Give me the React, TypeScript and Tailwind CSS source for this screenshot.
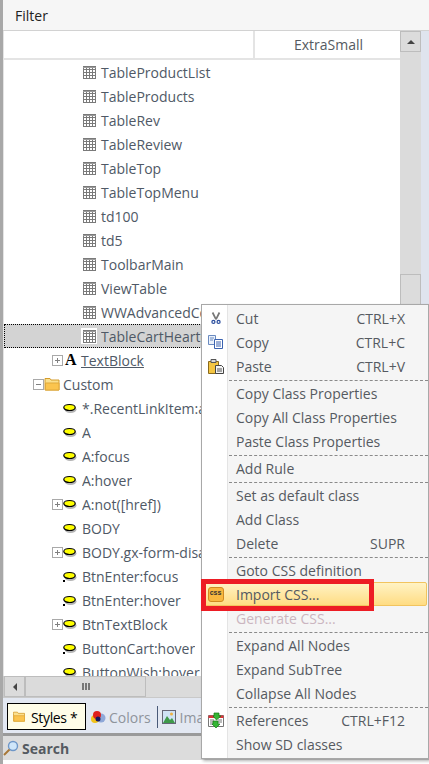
import type { ReactNode } from 'react';

const tableNames = [
  'TableProductList',
  'TableProducts',
  'TableRev',
  'TableReview',
  'TableTop',
  'TableTopMenu',
  'td100',
  'td5',
  'ToolbarMain',
  'ViewTable',
];

const customRows = [
  { name: '*.RecentLinkItem:active', plus: false },
  { name: 'A', plus: false },
  { name: 'A:focus', plus: false },
  { name: 'A:hover', plus: false },
  { name: 'A:not([href])', plus: true },
  { name: 'BODY', plus: false },
  { name: 'BODY.gx-form-disabled', plus: true },
  { name: 'BtnEnter:focus', plus: false, dot: true },
  { name: 'BtnEnter:hover', plus: false, dot: true },
  { name: 'BtnTextBlock', plus: true },
  { name: 'ButtonCart:hover', plus: false, dot: true },
  { name: 'ButtonWish:hover', plus: false, dot: true },
];

function TableIcon() {
  return (
    <svg width="13" height="13" viewBox="0 0 13 13" className="shrink-0">
      <rect x="0" y="0" width="13" height="13" fill="#fff" />
      <path d="M.5 0v13M3.5 0v13M6.5 0v13M9.5 0v13M12.5 0v13M0 .5h13M0 3.5h13M0 6.5h13M0 9.5h13M0 12.5h13" stroke="#7a7a7a" />
      <path d="M0 1.5h13" stroke="#9a9a9a" />
    </svg>
  );
}

function StyleIcon({ dot }: { dot?: boolean }) {
  return (
    <svg width="15" height="11" viewBox="0 0 15 11" className="shrink-0">
      <ellipse cx="7.5" cy="6.5" rx="6" ry="3.5" fill="#b5b5b5" />
      <ellipse cx="6.5" cy="4.5" rx="5.7" ry="3" fill="#ffff00" stroke="#000" strokeWidth="1.2" />
      {dot && <rect x="0" y="9" width="2" height="2" fill="#000" />}
    </svg>
  );
}

function Expander({ open }: { open?: boolean }) {
  return (
    <svg width="11" height="11" viewBox="0 0 11 11" className="shrink-0">
      <rect x="0.5" y="0.5" width="10" height="10" fill="#fff" stroke="#a9a9a9" />
      <path d={open ? 'M3 5.5h5' : 'M3 5.5h5M5.5 3v5'} stroke="#808080" />
    </svg>
  );
}

function FolderIcon({ w = 16, h = 14 }: { w?: number; h?: number }) {
  return (
    <svg width={w} height={h} viewBox="0 0 16 14" className="shrink-0">
      <path d="M1 3V1.5h5L7 3h8v10H1z" fill="#fbe08d" stroke="#d49c2c" />
      <path d="M1.5 6h13.5v7H1.5z" fill="#fbc44e" stroke="#e0a93a" />
    </svg>
  );
}

function Row({ className, children }: { className: string; children: ReactNode }) {
  return <div className={`flex h-6 items-center whitespace-nowrap ${className}`}>{children}</div>;
}

function Separator() {
  return <div className="ml-[27px] h-[3px] border-b border-dashed border-[#8a8a8a] pt-px" />;
}

function MenuItem({
  label,
  shortcut,
  icon,
  disabled,
}: {
  label: string;
  shortcut?: string;
  icon?: ReactNode;
  disabled?: boolean;
}) {
  return (
    <div className="flex h-6 items-center">
      <div className="flex h-6 w-[27px] shrink-0 items-center justify-center">{icon}</div>
      <span className={`ml-[7px] whitespace-nowrap ${disabled ? 'text-[#cbb5c0]' : 'text-[#555a61]'}`}>{label}</span>
      {shortcut && <span className="ml-auto mr-[23px] text-[#555a61]">{shortcut}</span>}
    </div>
  );
}

function CutIcon() {
  return (
    <svg width="12" height="15" viewBox="0 0 14 16">
      <path d="M3 1l4 8M11 1L7 9" stroke="#777" strokeWidth="2" />
      <circle cx="4" cy="12" r="2.5" fill="#2c4f9e" />
      <circle cx="10" cy="12" r="2.5" fill="#2c4f9e" />
      <circle cx="4" cy="12" r="1" fill="#fff" />
      <circle cx="10" cy="12" r="1" fill="#fff" />
    </svg>
  );
}

function CopyIcon() {
  return (
    <svg width="15" height="14" viewBox="0 0 15 14">
      <path d="M.5.5h7v9h-7z" fill="#eaf1fb" stroke="#6a8ac0" />
      <path d="M6.5 4.5h8v9h-8z" fill="#fff" stroke="#3a62b0" />
      <path d="M8 7h5M8 9h5M8 11h5" stroke="#3a62b0" />
      <path d="M2 3h4M2 5h3" stroke="#6a8ac0" />
    </svg>
  );
}

function PasteIcon() {
  return (
    <svg width="16" height="15" viewBox="0 0 16 15">
      <path d="M.5 2.5h10v12H.5z" fill="#f4c542" stroke="#8a6a1c" />
      <path d="M3 .5h5v3H3z" fill="#d8d8d8" stroke="#555" />
      <path d="M7.5 6.5h6l2 2v6h-8z" fill="#f4f4f4" stroke="#444" />
      <path d="M9 10h5M9 12h5" stroke="#555" />
    </svg>
  );
}

function CssIcon() {
  return (
    <div className="flex h-[15px] w-[16px] items-start justify-center rounded-[3px] border border-[#d08a20] bg-[#f8b840] font-['Liberation_Sans',sans-serif] text-[7px] font-bold leading-[10px] text-[#333]">
      css
    </div>
  );
}

function ReferencesIcon() {
  return (
    <svg width="16" height="16" viewBox="0 0 16 16">
      <path d="M.5 3.5h15v11H.5z" fill="#fff" stroke="#777" />
      <path d="M.5 3.5h15V6H.5z" fill="#d9363a" />
      <path d="M2 8h4M2 10h4M2 12h4M10 8h4M10 10h4" stroke="#777" />
      <path d="M6 1h5v3h2L8.5 8 5 4h1zM5 9h5v3h2l-4 4-4-4h1z" fill="#35b535" stroke="#157a15" strokeWidth="0.7" />
    </svg>
  );
}

export default function App() {
  return (
    <div className="relative h-[764px] w-[429px] overflow-hidden bg-white font-['Open_Sans',sans-serif] text-[14px] text-[#4f5966]">
      <div className="flex h-full">
        <div className="w-[3px] shrink-0 bg-[#a8a8a8]" />
        <div className="flex min-w-0 flex-1 flex-col">
          {/* Filter header */}
          <div className="flex h-[30px] shrink-0 items-center bg-[#f6f6f6] pl-[12px] text-[#222]">Filter</div>

          {/* Tree */}
          <div className="flex h-[646px] shrink-0 border-t border-[#d2d2d2]">
            <div className="min-w-0 flex-1 overflow-hidden border-l border-[#e4e4e4]">
              <div className="flex h-[29px] border-b-2 border-[#e4e4e4]">
                <div className="flex-1 border-r-2 border-[#e4e4e4]" />
                <div className="flex w-[145px] items-center justify-center pl-[2px] text-[#555a61]">ExtraSmall</div>
              </div>
              {tableNames.map(name => (
                <Row key={name} className="pl-[79px]">
                  <TableIcon />
                  <span className="ml-[5px]">{name}</span>
                </Row>
              ))}
              <Row className="pl-[79px]">
                <TableIcon />
                <span className="ml-[5px] max-w-[100px] overflow-hidden">WWAdvancedContainer</span>
              </Row>
              <Row className="border border-dotted border-black bg-[#d3d3d3] pl-[76px]">
                <span className="flex h-4 w-4 items-center justify-center bg-white">
                  <TableIcon />
                </span>
                <span className="ml-[4px] max-w-[100px] overflow-hidden">TableCartHeartContainer</span>
              </Row>
              <Row className="pl-[48px]">
                <Expander />
                <span className="ml-[2px] w-[13px] font-['Liberation_Serif',serif] text-[16px] font-bold leading-none text-black">A</span>
                <span className="ml-[3px] underline">TextBlock</span>
              </Row>
              <Row className="pl-[29px]">
                <Expander open />
                <FolderIcon />
                <span className="ml-[3px]">Custom</span>
              </Row>
              {customRows.map(row => (
                <Row key={row.name} className="pl-[48px]">
                  <div className="w-[11px] shrink-0">{row.plus && <Expander />}</div>
                  <StyleIcon dot={row.dot} />
                  <span className="ml-[4px] max-w-[119px] overflow-hidden">{row.name}</span>
                </Row>
              ))}
            </div>

            {/* Vertical scrollbar */}
            <div className="flex w-[21px] shrink-0 flex-col bg-[#dbdbdb]">
              <div className="flex h-[21px] items-center justify-center border border-[#bdbdbd] bg-[#dcdcdc]">
                <div className="h-0 w-0 border-x-[4px] border-b-[4px] border-x-transparent border-b-[#444]" />
              </div>
              <div className="mt-[222px] flex h-[66px] flex-col items-center justify-center gap-px border border-[#bdbdbd] bg-[#dcdcdc]">
                <div className="h-px w-[7px] bg-[#777]" />
                <div className="h-px w-[7px] bg-[#777]" />
                <div className="h-px w-[7px] bg-[#777]" />
              </div>
            </div>
            <div className="w-[8px] shrink-0 bg-[#dfe4ee]" />
          </div>

          {/* Horizontal scrollbar */}
          <div className="flex h-[21px] shrink-0 border-l border-[#c9c9c9] bg-[#dbdbdb]">
            <div className="flex w-[21px] items-center justify-center border border-[#bdbdbd]">
              <div className="h-0 w-0 border-y-[4px] border-r-[4px] border-y-transparent border-r-[#444]" />
            </div>
            <div className="flex w-[121px] items-center justify-center gap-px border border-[#bdbdbd]">
              <div className="h-[7px] w-[2px] bg-[#777]" />
              <div className="h-[7px] w-[2px] bg-[#777]" />
              <div className="h-[7px] w-[2px] bg-[#777]" />
            </div>
          </div>

          {/* Tabs */}
          <div className="flex h-[36px] shrink-0 items-start border-t border-[#c9c9c9] bg-[#e3e8f2] pl-[4px] pt-[5px]">
            <div className="flex h-[27px] w-[79px] items-center border border-black bg-[#fffde8] pl-[3px] tracking-tight text-black">
              <FolderIcon w={16} h={11} />
              <span className="ml-[4px] mt-[2px]">Styles *</span>
            </div>
            <div className="flex h-[27px] items-center">
              <svg width="16" height="14" viewBox="0 0 16 14" className="ml-[4px] shrink-0">
                <circle cx="11" cy="8" r="4.5" fill="#8fa8d8" />
                <circle cx="5" cy="9" r="4" fill="#f2c21a" />
                <circle cx="7" cy="5" r="4" fill="#e0201c" />
                <circle cx="8" cy="9" r="2.5" fill="#1a1a60" />
              </svg>
              <span className="ml-[3px] mt-[2px] text-[#8f949c]">Colors</span>
              <div className="ml-[6px] h-[22px] w-px bg-[#4a5a78]" />
              <svg width="14" height="14" viewBox="0 0 14 14" className="ml-[4px] shrink-0">
                <rect x="0.5" y="0.5" width="13" height="13" fill="#cfe2f5" stroke="#667" />
                <circle cx="9.5" cy="4" r="1.5" fill="#f0b040" />
                <path d="M1 13l4-7 3 4 2-2 3 5z" fill="#3f9a4a" />
              </svg>
              <span className="ml-[4px] mt-[2px] max-w-[22px] overflow-hidden whitespace-nowrap text-[#8f949c]">Images</span>
            </div>
          </div>

          <div className="h-[3px] shrink-0 bg-[#9a9a9a]" />

          {/* Search */}
          <div className="flex h-[24px] shrink-0 items-center bg-[#dcdcdc] font-bold text-[#555a61]">
            <svg width="16" height="16" viewBox="0 0 16 16" className="shrink-0">
              <circle cx="10" cy="6" r="4.5" fill="#cfe6fa" stroke="#6f97c8" strokeWidth="1.4" />
              <path d="M6.5 9.5L1 15" stroke="#a87838" strokeWidth="2" />
            </svg>
            <span className="ml-[3px] mt-px">Search</span>
          </div>
        </div>
      </div>

      {/* Context menu */}
      <div className="absolute left-[201px] top-[304px] h-[455px] w-[228px] border border-[#a8a8a8] bg-[#f5f5f5] py-px shadow-[2px_2px_3px_rgba(0,0,0,0.3)]">
        <div className="absolute bottom-0 left-0 top-0 w-[26px] border-r border-[#e4e4e4] bg-white" />
        <div className="relative">
          <MenuItem label="Cut" shortcut="CTRL+X" icon={<CutIcon />} />
          <MenuItem label="Copy" shortcut="CTRL+C" icon={<CopyIcon />} />
          <MenuItem label="Paste" shortcut="CTRL+V" icon={<PasteIcon />} />
          <Separator />
          <MenuItem label="Copy Class Properties" />
          <MenuItem label="Copy All Class Properties" />
          <MenuItem label="Paste Class Properties" />
          <Separator />
          <MenuItem label="Add Rule" />
          <Separator />
          <MenuItem label="Set as default class" />
          <MenuItem label="Add Class" />
          <MenuItem label="Delete" shortcut="SUPR" />
          <Separator />
          <MenuItem label="Goto CSS definition" />
          <div className="relative">
            <div className="absolute bottom-0 left-[2px] right-px top-0 rounded-[2px] border border-[#f2c45e] bg-gradient-to-b from-[#fff3c4] to-[#ffdc82]" />
            <div className="relative">
              <MenuItem label="Import CSS..." icon={<CssIcon />} />
            </div>
          </div>
          <MenuItem label="Generate CSS..." disabled />
          <Separator />
          <MenuItem label="Expand All Nodes" />
          <MenuItem label="Expand SubTree" />
          <MenuItem label="Collapse All Nodes" />
          <Separator />
          <MenuItem label="References" shortcut="CTRL+F12" icon={<ReferencesIcon />} />
          <MenuItem label="Show SD classes" />
        </div>
      </div>

      {/* Red annotation */}
      <div className="absolute left-[201px] top-[579px] h-[32px] w-[173px] border-[5px] border-[#ed1c24]" />
    </div>
  );
}
